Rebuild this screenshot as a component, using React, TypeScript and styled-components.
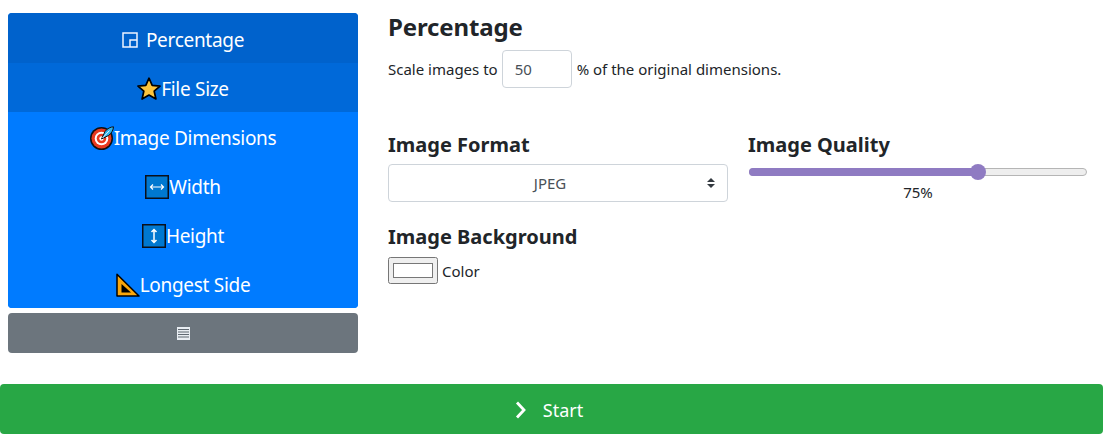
import React from "react";
import styled, { createGlobalStyle } from "styled-components";

const Global = createGlobalStyle`
  html, body { margin: 0; padding: 0; background: #fff; }
  body { font-family: "Noto Sans", "Open Sans", sans-serif; color: #212529; }
  * { box-sizing: border-box; }
`;

const Page = styled.div`
  width: 1111px;
  height: 444px;
  overflow: hidden;
  display: flex;
  flex-direction: column;
`;
const Top = styled.div`
  display: flex;
  height: 384px;
  padding: 13px 0 0 8px;
  gap: 30px;
`;
const Side = styled.nav`
  width: 350px;
  display: flex;
  flex-direction: column;
  gap: 5px;
`;
const Tabs = styled.div`
  display: flex;
  flex-direction: column;
  border-radius: 4px;
  overflow: hidden;
  background: #007bff;
`;
const Tab = styled.div<{ $bg?: string; $h?: number; $pad?: number }>`
  height: ${(p) => p.$h ?? 49}px;
  padding-top: ${(p) => p.$pad ?? 2}px;
  background: ${(p) => p.$bg ?? "#007bff"};
  color: #fff;
  font-size: 19px;
  letter-spacing: -0.3px;
  display: flex;
  align-items: center;
  justify-content: center;
`;
const PctIcon = styled.svg`
  width: 16px;
  height: 16px;
  margin-right: 8px;
`;
const Emoji = styled.svg`
  width: 24px;
  height: 24px;
  flex: none;
`;
const MenuBtn = styled.button`
  height: 40px;
  border: 0;
  border-radius: 4px;
  background: #6c757d;
  display: flex;
  align-items: center;
  justify-content: center;
  padding: 0;
`;
const Main = styled.main`
  width: 699px;
  display: flex;
  flex-direction: column;
`;
const H3 = styled.h3`
  margin: 0 0 1px;
  font-size: 24px;
  line-height: 28px;
  font-weight: 700;
  letter-spacing: -0.15px;
`;
const H4 = styled.h4`
  margin: 0;
  font-size: 20px;
  line-height: 24px;
  font-weight: 700;
`;
const ScaleRow = styled.div`
  display: flex;
  align-items: center;
  gap: 5px;
  margin-top: 8px;
  font-size: 15px;
  height: 38px;
`;
const NumInput = styled.input`
  width: 70px;
  height: 38px;
  margin-left: -1px;
  border: 1px solid #ced4da;
  border-radius: 4px;
  padding: 0 12px;
  font: inherit;
  color: #495057;
  outline: none;
`;
const Grid = styled.div`
  display: grid;
  grid-template-columns: 340px 339px;
  column-gap: 20px;
  margin-top: 45px;
`;
const Col = styled.div`
  display: flex;
  flex-direction: column;
`;
const Select = styled.select`
  margin-top: 7px;
  height: 38px;
  width: 340px;
  border: 1px solid #ced4da;
  border-radius: 4px;
  background: #fff url("data:image/svg+xml,%3csvg xmlns='http://www.w3.org/2000/svg' width='4' height='5' viewBox='0 0 4 5'%3e%3cpath fill='%23343a40' d='M2 0L0 2h4zm0 5L0 3h4z'/%3e%3c/svg%3e") no-repeat right 12px center / 8px 10px;
  appearance: none;
  font: inherit;
  font-size: 15px;
  color: #495057;
  text-align: center;
  text-align-last: center;
  padding: 0 28px 0 12px;
`;
const SliderWrap = styled.div`
  position: relative;
  margin-top: 11px;
  width: 338px;
  height: 8px;
  margin-left: 1px;
  border: 1px solid #b5b5b5;
  border-radius: 4px;
  background: #eee;
`;
const SliderFill = styled.div`
  position: absolute;
  left: -1px;
  top: -1px;
  bottom: -1px;
  background: #8f7bc2;
  border-radius: 4px 0 0 4px;
`;
const SliderThumb = styled.div`
  position: absolute;
  top: 50%;
  width: 16px;
  height: 16px;
  margin: -8px 0 0 -8px;
  border-radius: 50%;
  background: #8f7bc2;
`;
const SliderValue = styled.div`
  text-align: center;
  font-size: 15px;
  line-height: 20px;
  margin-top: 6px;
  padding-left: 1px;
`;
const Bg = styled.div`
  margin-top: 23px;
  display: flex;
  flex-direction: column;
`;
const ColorRow = styled.label`
  display: flex;
  align-items: center;
  gap: 4px;
  margin-top: 8px;
  font-size: 15px;
`;
const ColorInput = styled.input`
  width: 50px;
  height: 27px;
  margin: 0;
`;
const Footer = styled.div`
  padding-right: 8px;
`;
const Start = styled.button`
  width: 100%;
  height: 50px;
  border: 0;
  border-radius: 4px;
  background: #28a745;
  color: #fff;
  font: inherit;
  font-size: 18px;
  display: flex;
  align-items: center;
  justify-content: center;
  gap: 16px;
  padding: 2px 5px 0 0;
`;

const Star = () => (
  <Emoji viewBox="0 0 24 24">
    <path d="M12 1.200l3.200 7.100 7.800.8-5.800 5.100 1.700 7.800L12 18.100 5.100 22l1.700-7.800L1 9.100l7.800-.8z" fill="#fcc43d" stroke="#000" strokeWidth="1.700" strokeLinejoin="round" />
  </Emoji>
);
const Target = () => (
  <Emoji viewBox="0 0 24 24">
    <circle cx="11.500" cy="12.500" r="11.500" fill="#111" />
    <circle cx="11.500" cy="12.500" r="10" fill="#e8391f" />
    <circle cx="11.500" cy="12.500" r="6.800" fill="#fff" />
    <circle cx="11.500" cy="12.500" r="4.800" fill="#e8391f" />
    <circle cx="11.500" cy="12.500" r="2.200" fill="#fff" />
    <path d="M11.500 13L15 5.500C17 2.500 21 .8 23.500 .8 23.500 3.500 21.500 7.500 18.500 9.500z" fill="#2fb3ea" stroke="#111" strokeWidth="1" />
    <path d="M12.500 12l7-7.500" stroke="#e8f7ff" strokeWidth="1" />
  </Emoji>
);
const ArrowBox = ({ vertical }: { vertical?: boolean }) => (
  <Emoji viewBox="0 0 24 24">
    <rect x=".75" y=".75" width="22.500" height="22.500" fill="#0078d0" stroke="#0a0f1a" strokeWidth="1.500" />
    {vertical ? (
      <path d="M12 5.500v13M9.500 8L12 5.500 14.500 8M9.500 16l2.500 2.500 2.500-2.500" stroke="#fff" strokeWidth="1.500" fill="none" />
    ) : (
      <path d="M5.500 12h13M8 9.500L5.500 12 8 14.500M16 9.500l2.500 2.500-2.500 2.500" stroke="#fff" strokeWidth="1.200" fill="none" />
    )}
  </Emoji>
);
const Ruler = () => (
  <Emoji viewBox="0 0 24 24">
    <path d="M1 1.200L23 23H1z" fill="#f9a60c" stroke="#000" strokeWidth="1.500" strokeLinejoin="round" />
    <path d="M5.500 11L15 19.500H5.500z" fill="#000" />
  </Emoji>
);

export default function App() {
  return (
    <Page>
      <Global />
      <Top>
        <Side>
          <Tabs>
            <Tab $bg="#0062cc" $h={50} $pad={3}>
              <PctIcon viewBox="0 0 16 16">
                <path d="M1 1h14v14H1zM8 15V8h7" fill="none" stroke="#eef4ff" strokeWidth="1.500" />
              </PctIcon>
              Percentage
            </Tab>
            <Tab $bg="#0069d9"><Star />File Size</Tab>
            <Tab><Target />Image Dimensions</Tab>
            <Tab><ArrowBox />Width</Tab>
            <Tab><ArrowBox vertical />Height</Tab>
            <Tab><Ruler />Longest Side</Tab>
          </Tabs>
          <MenuBtn aria-label="menu">
            <svg width="13" height="13" viewBox="0 0 13 13">
              <path d="M0 0h13v13H0z" fill="#e8edf2" />
              <path d="M1 2.500h11M1 5h11M1 7.500h11M1 10h11" stroke="#5f6871" strokeWidth="1" />
            </svg>
          </MenuBtn>
        </Side>
        <Main>
          <H3>Percentage</H3>
          <ScaleRow>
            <span>Scale images to</span>
            <NumInput defaultValue="50" />
            <span>% of the original dimensions.</span>
          </ScaleRow>
          <Grid>
            <Col>
              <H4>Image Format</H4>
              <Select defaultValue="JPEG">
                <option>JPEG</option>
                <option>PNG</option>
              </Select>
              <Bg>
                <H4>Image Background</H4>
                <ColorRow>
                  <ColorInput type="color" defaultValue="#ffffff" />
                  Color
                </ColorRow>
              </Bg>
            </Col>
            <Col>
              <H4>Image Quality</H4>
              <SliderWrap>
                <SliderFill style={{ width: "68%" }} />
                <SliderThumb style={{ left: "68%" }} />
              </SliderWrap>
              <SliderValue>75%</SliderValue>
            </Col>
          </Grid>
        </Main>
      </Top>
      <Footer>
        <Start>
          <svg width="12" height="18" viewBox="0 0 12 18">
            <path d="M2 1.500L9 9l-7 7.500" fill="none" stroke="#fff" strokeWidth="2.800" />
          </svg>
          Start
        </Start>
      </Footer>
    </Page>
  );
}
